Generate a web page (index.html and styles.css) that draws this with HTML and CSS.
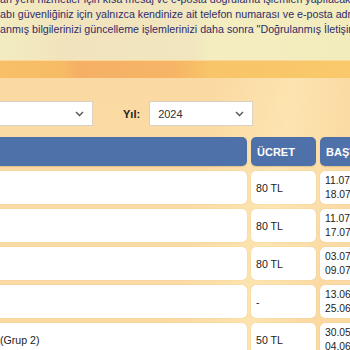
FILE: index.html
```html
<!DOCTYPE html>
<html lang="tr">
<head>
  <meta charset="UTF-8" />
  <title>Sınav Ücretleri</title>
  <link rel="stylesheet" href="styles.css">
</head>
<body>
  <div class="top">
    <p class="notice">
      <span>an yeni hizmetler için kısa mesaj ve e-posta doğrulama işlemleri yapılacaktır.</span>
      <span>abı güvenliğiniz için yalnızca kendinize ait telefon numarası ve e-posta adresi</span>
      <span>anmış bilgilerinizi güncelleme işlemlerinizi daha sonra "Doğrulanmış İletişim Bilgileri"</span>
    </p>
  </div>
  <div class="band"></div>

  <div class="filters">
    <div class="select sel-month">
      <span></span>
      <svg width="9" height="6" viewBox="0 0 9 6"><path d="M1 1l3.5 3.5L8 1" fill="none" stroke="#555" stroke-width="1.4"/></svg>
    </div>
    <label>Yıl:</label>
    <div class="select sel-year">
      <span>2024</span>
      <svg width="9" height="6" viewBox="0 0 9 6"><path d="M1 1l3.5 3.5L8 1" fill="none" stroke="#555" stroke-width="1.4"/></svg>
    </div>
  </div>

  <table class="fees">
    <colgroup>
      <col class="c-name">
      <col class="c-fee">
      <col class="c-date">
    </colgroup>
    <thead>
      <tr>
        <th></th>
        <th>ÜCRET</th>
        <th>BAŞVURU TARİHLERİ</th>
      </tr>
    </thead>
    <tbody>
      <tr>
        <td></td>
        <td>80 TL</td>
        <td class="date">11.07.2024<br>18.07.2024</td>
      </tr>
      <tr>
        <td></td>
        <td>80 TL</td>
        <td class="date">11.07.2024<br>17.07.2024</td>
      </tr>
      <tr>
        <td></td>
        <td>80 TL</td>
        <td class="date">03.07.2024<br>09.07.2024</td>
      </tr>
      <tr>
        <td></td>
        <td>-</td>
        <td class="date">13.06.2024<br>25.06.2024</td>
      </tr>
      <tr>
        <td class="name">(Grup 2)</td>
        <td>50 TL</td>
        <td class="date">30.05.2024<br>04.06.2024</td>
      </tr>
    </tbody>
  </table>
</body>
</html>
```

FILE: styles.css
```css
html, body {
  margin: 0;
  height: 100%;
}
body {
  font-family: "Liberation Sans", Arial, sans-serif;
  overflow: hidden;
  background:
    linear-gradient(100deg, rgba(255,255,255,0) 55%, rgba(255,240,190,0.45) 75%, rgba(255,255,255,0) 90%),
    linear-gradient(180deg, #fbd7a0 0%, #fbdca6 60%, #fbd9a0 100%);
}
.top {
  height: 60px;
  background: linear-gradient(90deg, #f3ecc0 0%, #f1e3bd 20%, #f1e6bf 55%, #f3edc0 60%, #f2ecbd 100%);
  overflow: hidden;
}
.notice {
  margin: -8px 0 0 0;
  font-size: 10.7px;
  line-height: 15px;
  color: #302c6a;
  white-space: nowrap;
}
.notice span {
  display: block;
}
.band {
  height: 17px;
  background: linear-gradient(90deg, #f8bf68 0%, #f7bb66 18%, #f5b066 22%, #f6b566 50%, #f8c568 60%, #f9c96c 100%);
  border-top: 1px solid #fbd896;
}
.filters {
  display: flex;
  align-items: center;
  margin-top: 23px;
  height: 25px;
}
.select {
  display: flex;
  align-items: center;
  justify-content: space-between;
  box-sizing: border-box;
  height: 25px;
  background: #fff;
  border: 1px solid #d9d2c4;
  padding: 0 8px 0 8px;
  font-size: 11px;
  color: #333;
}
.sel-month {
  width: 104px;
  margin-left: -11px;
}
.sel-year {
  width: 104px;
}
.filters label {
  font-size: 11px;
  font-weight: bold;
  color: #222;
  margin: 0 9px 0 30px;
}
.fees {
  table-layout: fixed;
  border-collapse: separate;
  border-spacing: 4px 5px;
  width: 428px;
  margin: 6px 0 0 -20px;
  font-size: 10.6px;
  color: #222;
}
.c-name { width: 263px; }
.c-fee { width: 65px; }
.c-date { width: 88px; }
.fees th {
  background: #4f71a9;
  color: #fff;
  font-size: 11px;
  font-weight: bold;
  text-align: left;
  height: 29px;
  padding: 0 6px;
  border-radius: 5px;
  white-space: nowrap;
  overflow: hidden;
  box-shadow: 0 1px 1px rgba(120,90,40,0.2);
}
.fees td {
  background: #fff;
  height: 33px;
  padding: 0 5px;
  border-radius: 5px;
  box-sizing: border-box;
  white-space: nowrap;
  overflow: hidden;
  box-shadow: 0 0 1px rgba(200,150,80,0.5);
}
.fees td.date {
  padding-left: 5px;
  font-size: 10.3px;
  line-height: 14px;
}
.fees td.name {
  padding-left: 16px;
}
```
